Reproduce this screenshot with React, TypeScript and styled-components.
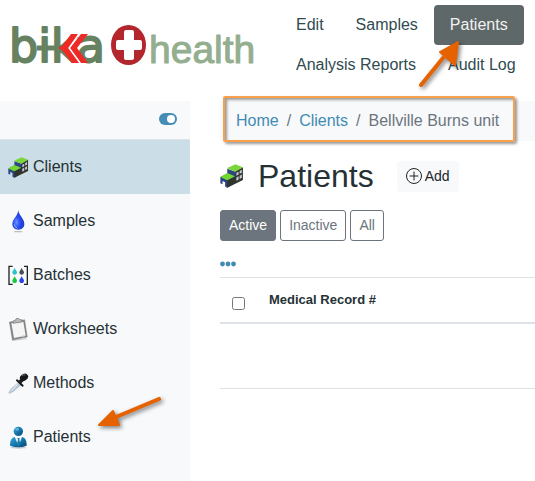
import React from "react";
import styled, { createGlobalStyle } from "styled-components";

const GlobalStyle = createGlobalStyle`
  *, *::before, *::after { box-sizing: border-box; }
  body {
    margin: 0;
    background: #fff;
    color: #253134;
    font-family: "Liberation Sans", Arial, sans-serif;
    font-size: 16px;
    line-height: 24px;
    overflow-x: hidden;
  }
  a { text-decoration: none; }
  button { font-family: inherit; cursor: pointer; }
`;

const Page = styled.div`
  display: flex;
  flex-direction: column;
  min-height: 100vh;
`;

const Header = styled.header`
  display: flex;
  align-items: flex-start;
  padding: 5px 0 16px;
`;

const Brand = styled.a`
  flex: none;
  width: 280px;
  padding-top: 11px;
  svg { display: block; }
`;

const MainNav = styled.nav`
  position: relative;
  flex: 1;
  display: flex;
  flex-wrap: wrap;
`;

const NavLink = styled.a<{ $active?: boolean }>`
  padding: 8px 16px;
  border-radius: 4px;
  color: ${(p) => (p.$active ? "#f1f1f1" : "#2f4b4f")};
  background: ${(p) => (p.$active ? "#5f6868" : "transparent")};
`;

const Arrow = styled.svg`
  position: absolute;
  pointer-events: none;
  fill: #e66100;
  stroke: #e66100;
  stroke-linejoin: round;
  stroke-linecap: round;
  filter: drop-shadow(2px 2px 2px rgba(0, 0, 0, 0.5));
`;

const NavArrow = styled(Arrow)`
  left: 134px;
  top: 33px;
`;

const SideArrow = styled(Arrow)`
  left: 94px;
  top: -16px;
`;

const Body = styled.div`
  flex: 1;
  display: flex;
`;

const Sidebar = styled.aside`
  flex: none;
  width: 190px;
  background: #f8f9fb;
`;

const SidebarTop = styled.div`
  display: flex;
  justify-content: flex-end;
  padding: 12px 13px 14px 0;
  border-bottom: 1px solid #dde2e6;
`;

const IconButton = styled.button`
  display: block;
  padding: 0;
  border: 0;
  background: none;
  line-height: 0;
`;

const SideList = styled.ul`
  list-style: none;
  margin: 0;
  padding: 0;
`;

const SideItem = styled.li`
  position: relative;
`;

const SideLink = styled.a<{ $active?: boolean }>`
  display: flex;
  align-items: center;
  gap: 4px;
  padding: 15px 8px;
  color: #253134;
  background: ${(p) => (p.$active ? "#cbdde6" : "transparent")};
`;

const Content = styled.main`
  flex: 1;
  min-width: 0;
  padding-left: 30px;
`;

const Breadcrumb = styled.nav`
  padding: 8px 16px;
  background: #f8f9fb;
`;

const Crumbs = styled.ol`
  position: relative;
  display: inline-flex;
  vertical-align: top;
  list-style: none;
  margin: 0;
  padding: 0;
  white-space: nowrap;
  color: #6c757d;
  a { color: #3f8bb3; }
  li + li::before {
    content: "/";
    padding: 0 8px;
  }
  &::after {
    content: "";
    position: absolute;
    inset: -13px -16px -9px -13px;
    border: 2px solid #f9a04c;
    border-radius: 2px;
    box-shadow: 2px 2px 3px rgba(0, 0, 0, 0.4), inset 2px 2px 3px rgba(0, 0, 0, 0.4);
    pointer-events: none;
  }
`;

const TitleRow = styled.div`
  display: flex;
  align-items: center;
  padding-top: 16px;
`;

const Title = styled.h1`
  margin: 0 23px 0 14px;
  font-size: 32px;
  font-weight: 400;
  line-height: 38px;
`;

const AddButton = styled.button`
  display: flex;
  align-items: center;
  gap: 3px;
  padding: 4px 8px;
  border: 1px solid #f8f9fb;
  border-radius: 3px;
  background: #f8f9fb;
  color: #212529;
  font-size: 14px;
  line-height: 21px;
`;

const Filters = styled.div`
  display: flex;
  gap: 4px;
  padding-top: 15px;
`;

const FilterButton = styled.button<{ $active?: boolean }>`
  padding: 4px 8px;
  border: 1px solid #6c757d;
  border-radius: 3px;
  font-size: 14px;
  line-height: 21px;
  color: ${(p) => (p.$active ? "#fff" : "#6c757d")};
  background: ${(p) => (p.$active ? "#6c757d" : "#fff")};
`;

const MoreRow = styled.div`
  padding: 20px 0 10px;
`;

const Table = styled.table`
  width: 100%;
  border-collapse: collapse;
  font-size: 13px;
  line-height: 20px;
`;

const HeadCell = styled.th<{ $narrow?: boolean }>`
  width: ${(p) => (p.$narrow ? "37px" : "auto")};
  padding: 12px;
  text-align: left;
  vertical-align: top;
  border-top: 1px solid #dee2e6;
  border-bottom: 2px solid #dee2e6;
`;

const Check = styled.input`
  display: block;
  width: 13px;
  height: 13px;
  margin: 7px 0 0;
`;

const EmptyCell = styled.td`
  height: 65px;
  padding: 0;
  border-bottom: 1px solid #dee2e6;
`;

const Logo = () => (
  <svg width="270" height="60" viewBox="0 16 270 60" role="img" aria-label="bika health">
    <text x="9" y="62" fontFamily="DejaVu Sans" fontSize="46" fill="#668261" stroke="#668261" strokeWidth="2" strokeLinejoin="round">bika</text>
    <path d="M37 48H60" stroke="#668261" strokeWidth="5" />
    <g fill="#ee2a27">
      <path d="M59 47l3-1 9-12h7L69 48l11 15h-8L62 50l-3-1z" />
      <path d="M81 34h7L77 48l11 15h-7L70 48z" />
    </g>
    <path d="M79 34L69 48l11 15" fill="none" stroke="#fff" strokeWidth="1.3" />
    <ellipse cx="128.500" cy="45" rx="17.500" ry="20" fill="#b3262e" />
    <path d="M126 30h6q2 0 2 2v8h6q2 0 2 2v6q0 2-2 2h-6v8q0 2-2 2h-6q-2 0-2-2v-8h-6q-2 0-2-2v-6q0-2 2-2h6v-8q0-2 2-2z" fill="#fff" />
    <text x="149" y="63" fontFamily="Liberation Sans" fontSize="39" fill="#94ae90" stroke="#94ae90" strokeWidth="1" strokeLinejoin="round">health</text>
  </svg>
);

const Building = ({ size = 21 }: { size?: number }) => (
  <svg width={size} height={size} viewBox="0 0 64 66" aria-hidden="true">
    <path d="M0 36l19-10V13l25 9v26L19 65l-6-3V50l-7-3v9l-6-3z" fill="#2d4686" />
    <path d="M41 20L62 9v35L19 65V44l22-9z" fill="#30352b" />
    <path d="M18 12L41 1l21 8-21 12z" fill="#7ad63b" />
    <path d="M0 36l19-11 21 9-21 11z" fill="#72d82f" />
    <path d="M44 24l6-3v8l-6 3zM53 19l6-3v8l-6 3zM44 37l6-3v9l-6 3zM53 32l6-3v9l-6 3z" fill="#c8ccdc" />
  </svg>
);

const Drop = () => (
  <svg width="21" height="24" viewBox="0 0 63 72" aria-hidden="true">
    <defs>
      <radialGradient id="dropFill" cx=".35" cy=".62" r=".65">
        <stop offset="0" stopColor="#6b91ff" />
        <stop offset=".45" stopColor="#274cf0" />
        <stop offset="1" stopColor="#1f36c8" />
      </radialGradient>
    </defs>
    <ellipse cx="31" cy="68" rx="14" ry="2" fill="#b9bbc0" />
    <path d="M31 4c2 16 18 25 18 41 0 10-7 17-18 17s-18-7-18-17C13 30 29 22 31 4z" fill="url(#dropFill)" />
    <path d="M19 46q0 9 9 11" fill="none" stroke="#91adff" strokeWidth="3" />
  </svg>
);

const miniDrop = "c1 6 7 9 7 14 0 4-3 7-7 7s-7-3-7-7c0-5 6-8 7-14z";

const Batch = () => (
  <svg width="21" height="21" viewBox="0 0 63 63" aria-hidden="true">
    <path d="M14 4H3v54h11M48 4h10v54H48" fill="none" stroke="#202324" strokeWidth="4" />
    <path d={"M20 8" + miniDrop} fill="#29c2c9" />
    <path d={"M41 8" + miniDrop} fill="#4b4d4f" />
    <path d={"M20 33" + miniDrop} fill="#1dca3e" />
    <path d={"M41 33" + miniDrop} fill="#2645e5" />
  </svg>
);

const Clipboard = () => (
  <svg width="21" height="23" viewBox="0 0 63 69" aria-hidden="true">
    <path d="M10 66l45-6 2 3-42 6z" fill="#c9cacc" />
    <path d="M4 12L50 5l8 52-45 9z" fill="#858585" stroke="#777" strokeWidth="1" strokeLinejoin="round" />
    <path d="M10 16l36-5 7 42-35 7z" fill="#f5f5f5" />
    <path d="M53 53l-9-1-2 7z" fill="#c5c5c5" />
    <path d="M15 9l7-2 2-5 8-1 3 4 6 0 1 7-26 4z" fill="#b8b8b8" stroke="#777" strokeWidth="2" />
  </svg>
);

const Pipette = () => (
  <svg width="21" height="21" viewBox="0 0 63 63" aria-hidden="true">
    <path d="M34 26l8 8-25 21-13 7-2-3 7-12z" fill="#b9c8d5" stroke="#a6b2bd" strokeWidth="1" />
    <path d="M31 31L10 53" stroke="#edf4f8" strokeWidth="3" />
    <path d="M27 22l17 16" stroke="#17191b" strokeWidth="6" strokeLinecap="round" />
    <path d="M34 29l14-14" stroke="#202224" strokeWidth="11" />
    <ellipse cx="48" cy="13" rx="13" ry="10" transform="rotate(-30 48 13)" fill="#17191a" />
    <path d="M42 8q5-4 10-2" stroke="#65696c" strokeWidth="3" fill="none" />
  </svg>
);

const Person = () => (
  <svg width="21" height="23" viewBox="0 0 63 69" aria-hidden="true">
    <defs>
      <linearGradient id="personFill" x1="0" y1="0" x2="1" y2="1">
        <stop offset="0" stopColor="#3ba4d6" />
        <stop offset=".5" stopColor="#1478ae" />
        <stop offset="1" stopColor="#07456f" />
      </linearGradient>
    </defs>
    <ellipse cx="31" cy="65" rx="24" ry="3" fill="#c8ccd0" />
    <path d="M6 59c0-14 3-25 16-26h18c13 1 16 12 16 26q-25 9-50 0z" fill="url(#personFill)" />
    <path d="M20 32h22L32 61z" fill="#eef7fb" />
    <path d="M28 36h7l-1 5 3 12-5 8-5-8 3-12z" fill="#1679aa" />
    <circle cx="31" cy="16" r="14" fill="url(#personFill)" />
    <ellipse cx="27" cy="10" rx="6" ry="4" fill="#78c4e7" opacity=".7" />
  </svg>
);

const sideItems = [
  { label: "Clients", icon: <Building />, active: true },
  { label: "Samples", icon: <Drop /> },
  { label: "Batches", icon: <Batch /> },
  { label: "Worksheets", icon: <Clipboard /> },
  { label: "Methods", icon: <Pipette /> },
  { label: "Patients", icon: <Person />, arrow: true },
];

export default function App() {
  return (
    <Page>
      <GlobalStyle />
      <Header>
        <Brand href="#"><Logo /></Brand>
        <MainNav aria-label="Sections">
          <NavLink href="#">Edit</NavLink>
          <NavLink href="#">Samples</NavLink>
          <NavLink href="#" $active aria-current="page">Patients</NavLink>
          <NavLink href="#">Analysis Reports</NavLink>
          <NavLink href="#">Audit Log</NavLink>
          <NavArrow width="60" height="60" viewBox="0 0 60 60" aria-hidden="true">
            <path d="M7 47L29 20" strokeWidth="4" />
            <path d="M44 4L26 14l15 13z" strokeWidth="2" />
          </NavArrow>
        </MainNav>
      </Header>
      <Body>
        <Sidebar>
          <SidebarTop>
            <IconButton aria-label="Toggle sidebar">
              <svg width="18" height="12" viewBox="0 0 18 12">
                <rect width="18" height="12" rx="6" fill="#468db6" />
                <circle cx="12" cy="6" r="4" fill="#fff" />
              </svg>
            </IconButton>
          </SidebarTop>
          <SideList>
            {sideItems.map((item) => (
              <SideItem key={item.label}>
                <SideLink href="#" $active={item.active}>
                  {item.icon}
                  {item.label}
                </SideLink>
                {item.arrow && (
                  <SideArrow width="80" height="50" viewBox="0 0 80 50" aria-hidden="true">
                    <path d="M65 5L22 23" strokeWidth="4" />
                    <path d="M5 31L19 17l6 14z" strokeWidth="2" />
                  </SideArrow>
                )}
              </SideItem>
            ))}
          </SideList>
        </Sidebar>
        <Content>
          <Breadcrumb aria-label="Breadcrumb">
            <Crumbs>
              <li><a href="#">Home</a></li>
              <li><a href="#">Clients</a></li>
              <li aria-current="page">Bellville Burns unit</li>
            </Crumbs>
          </Breadcrumb>
          <TitleRow>
            <Building size={24} />
            <Title>Patients</Title>
            <AddButton>
              <svg width="16" height="16" viewBox="0 0 16 16" fill="none" stroke="#212529" aria-hidden="true">
                <circle cx="8" cy="8" r="7.500" />
                <path d="M8 4v8M4 8h8" strokeLinecap="round" />
              </svg>
              Add
            </AddButton>
          </TitleRow>
          <Filters>
            <FilterButton $active aria-pressed="true">Active</FilterButton>
            <FilterButton>Inactive</FilterButton>
            <FilterButton>All</FilterButton>
          </Filters>
          <MoreRow>
            <IconButton aria-label="More columns">
              <svg width="17" height="6" viewBox="0 0 17 6" fill="#3f8bb3">
                <circle cx="2.500" cy="3" r="2.400" />
                <circle cx="8" cy="3" r="2.400" />
                <circle cx="13.500" cy="3" r="2.400" />
              </svg>
            </IconButton>
          </MoreRow>
          <Table>
            <thead>
              <tr>
                <HeadCell $narrow><Check type="checkbox" aria-label="Select all" /></HeadCell>
                <HeadCell>Medical Record #</HeadCell>
              </tr>
            </thead>
            <tbody>
              <tr><EmptyCell colSpan={2} /></tr>
            </tbody>
          </Table>
        </Content>
      </Body>
    </Page>
  );
}
